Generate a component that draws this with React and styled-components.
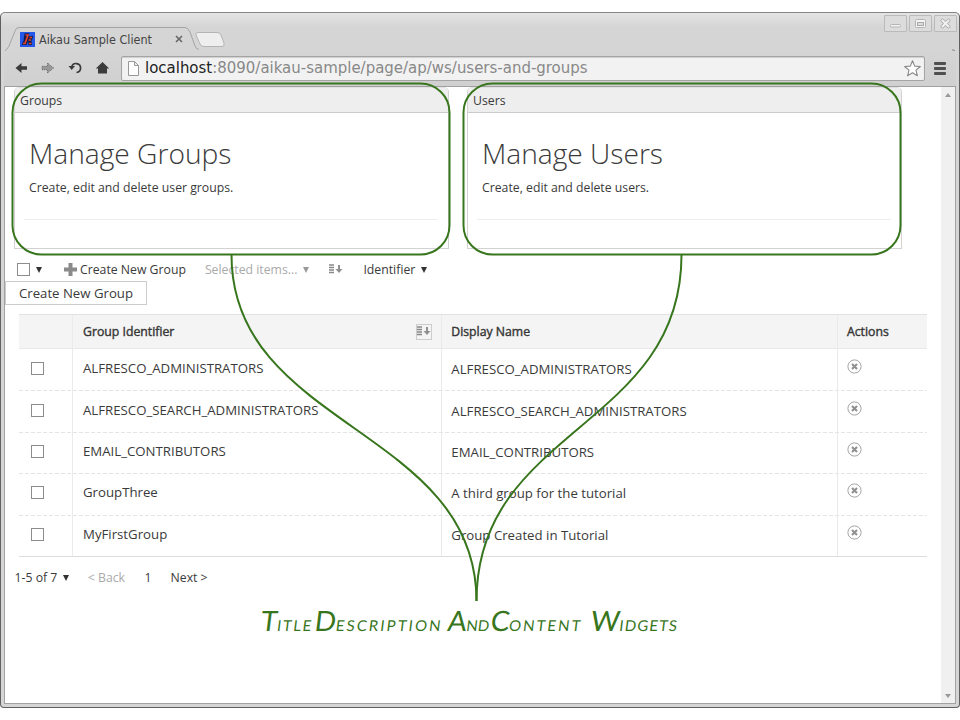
import React from 'react';
import styled, { createGlobalStyle } from 'styled-components';

const GlobalStyle = createGlobalStyle`
  * { box-sizing: border-box; }
  body { margin: 0; background: #fff; overflow: hidden; }
`;

const Stage = styled.div`
  position: relative;
  width: 960px;
  height: 720px;
  padding-top: 12px;
  font-family: "Open Sans", "Noto Sans", sans-serif;
  font-size: 12.25px;
  color: #3a3a3a;
`;

const Window = styled.div`
  display: flex;
  flex-direction: column;
  height: 696px;
  border: 1px solid #606060;
  border-top-color: #858585;
  border-radius: 5px 5px 4px 4px;
  background: linear-gradient(#e4e4e4, #d5d5d5 14px, #d5d5d5);
  overflow: hidden;
`;

const TabStrip = styled.div`
  display: flex;
  height: 37px;
  flex: none;
  position: relative;
`;

const TabShapes = styled.svg`
  position: absolute;
  left: 0;
  top: 0;
`;

const TabContent = styled.div`
  position: relative;
  display: flex;
  align-items: center;
  width: 170px;
  height: 24px;
  margin: 14px 0 0 19px;
  font: 12.5px "DejaVu Sans Condensed", "DejaVu Sans", sans-serif;
  color: #444;
`;

const TabTitle = styled.span`
  margin-left: 4px;
  white-space: nowrap;
  flex: 1;
`;

const TabClose = styled.svg`
  margin-right: 7px;
`;

const WindowButtons = styled.div`
  display: flex;
  gap: 2px;
  margin: 2px 2px 0 auto;
  position: relative;
`;

const WindowButton = styled.div`
  display: grid;
  place-items: center;
  width: 23px;
  height: 17px;
  border: 1px solid #bababa;
  border-radius: 1px;
  background: #dcdcdc;
`;

const Toolbar = styled.div`
  display: flex;
  align-items: center;
  flex: none;
  height: 37px;
  margin: 0 3px;
  border-bottom: 1px solid #a0a0a0;
  background: linear-gradient(#d5d5d5, #d0d0d0);
`;

const NavIcons = styled.svg`
  flex: none;
`;

const AddressBar = styled.div`
  display: flex;
  align-items: center;
  width: 804px;
  height: 25px;
  padding: 0 3px 0 6px;
  border: 1px solid #a4a4a4;
  border-radius: 2px;
  background: #f2f2f2;
  box-shadow: inset 0 1px 1px #cfcfcf;
  font: 14.97px "DejaVu Sans", sans-serif;
  color: #888;
`;

const Url = styled.span`
  flex: 1;
  margin-left: 6px;
  white-space: nowrap;
  b { font-weight: 400; color: #222; }
`;

const MenuIcon = styled.div`
  display: grid;
  gap: 2px;
  margin-left: 9px;
  i { width: 12px; height: 3px; border-radius: 1px; background: #505050; }
`;

const Viewport = styled.div`
  display: flex;
  flex: 1;
  margin: 0 3px 3px;
  border: 1px solid #a2a2a2;
  border-top: 0;
  background: #fff;
  min-height: 0;
`;

const Page = styled.main`
  width: 936px;
  flex: none;
`;

const Scrollbar = styled.div`
  display: flex;
  flex-direction: column;
  justify-content: space-between;
  align-items: center;
  flex: 1;
  padding: 6px 0 5px;
  background: #f0f0f0;
`;

const ScrollArrow = styled.div`
  border: 3.5px solid transparent;
  border-top-width: 0;
  border-bottom: 4px solid #999;
  transform: ${p => (p.$down ? 'rotate(180deg)' : 'none')};
`;

const Cards = styled.section`
  display: flex;
  gap: 18px;
  padding-left: 9px;
`;

const Card = styled.article`
  width: 435px;
  height: 162px;
  border: 1px solid #d2d2d2;
  border-top-color: #e2e2e2;
  border-radius: 5px 5px 0 0;
`;

const CardHeader = styled.header`
  height: 25px;
  padding-left: 5px;
  border-bottom: 1px solid #ccc;
  border-radius: 4px 4px 0 0;
  background: #eee;
  line-height: 26px;
`;

const CardTitle = styled.h1`
  margin: 0 0 0 14px;
  padding-top: 21px;
  font-size: 28.15px;
  font-weight: 300;
  line-height: 38px;
`;

const CardText = styled.p`
  height: 48px;
  margin: 0 10px 0 9px;
  padding-left: 5px;
  border-bottom: 1px solid #eee;
  line-height: 32px;
`;

const Actions = styled.div`
  display: flex;
  align-items: center;
  height: 40px;
  padding: 0 0 0 12px;
  white-space: nowrap;
`;

const CheckBox = styled.span`
  flex: none;
  width: 13px;
  height: 13px;
  border: 1px solid #8c8c8c;
  background: #fff;
`;

const Caret = styled.span`
  flex: none;
  width: 0;
  height: 0;
  margin: 1px 0 0 6px;
  border: 3.5px solid transparent;
  border-bottom-width: 0;
  border-top: 6px solid ${p => (p.$muted ? '#999' : '#333')};
`;

const PlusIcon = styled.svg`
  margin: 0 3px 0 22px;
`;

const ActionLabel = styled.span`
  margin-left: ${p => p.$left || 0}px;
  color: ${p => (p.$muted ? '#aaa' : '#3a3a3a')};
`;

const SortIcon = styled.svg`
  margin-left: ${p => p.$left || 0}px;
`;

const CreateButton = styled.button`
  display: block;
  width: 142px;
  height: 24px;
  margin: -8px 0 0;
  padding: 0;
  border: 1px solid #ccc;
  background: #fff;
  color: #3a3a3a;
  font: 13.2px/20px "Open Sans", sans-serif;
`;

const Table = styled.div`
  width: 908px;
  margin: 9px 0 0 14px;
  border-bottom: 1px solid #ddd;
`;

const Row = styled.div`
  display: grid;
  grid-template-columns: 54px 369px 396px 89px;
  height: 41.4px;
  font-size: 13.23px;
  & + & { background: repeating-linear-gradient(90deg, #e4e4e4 0 4px, transparent 4px 6px) top / 100% 1px no-repeat; }
`;

const HeadRow = styled.div`
  display: grid;
  grid-template-columns: 54px 369px 396px 89px;
  height: 35px;
  border-top: 1px solid #e2e2e2;
  border-bottom: 1px solid #e8e8e8;
  background: #f4f4f4;
  -webkit-text-stroke: 0.4px #333;
`;

const Cell = styled.div`
  display: flex;
  align-items: center;
  justify-content: ${p => (p.$spread ? 'space-between' : 'flex-start')};
  padding: 0 10px ${p => p.$lift || 0}px ${p => p.$inset || 10}px;
  border-right: 1px solid #ebebeb;
  &:last-child { border-right: 0; }
`;

const SortBox = styled.span`
  display: grid;
  place-items: center;
  width: 16px;
  height: 16px;
  margin-right: -1px;
  border: 1px solid #ccc;
`;

const Pager = styled.nav`
  display: flex;
  align-items: center;
  height: 41px;
  padding-left: 9.5px;
`;

const Annotation = styled.svg`
  position: absolute;
  inset: 0;
  pointer-events: none;
`;

const Caption = styled.div`
  position: absolute;
  left: 261px;
  top: 603px;
  width: 430px;
  display: flex;
  align-items: baseline;
  color: #38761d;
  font-family: Lato, sans-serif;
  font-variant: small-caps;
  white-space: pre;
  transform: skewX(-7deg);
`;

const Word = styled.span`
  display: inline-block;
  width: ${p => p.$width}px;
  font-size: 22px;
  line-height: 34px;
  letter-spacing: ${p => p.$track}px;
  &::first-letter { font-size: 28px; letter-spacing: 0; line-height: 34px; }
`;

const Sort = ({ left }) => (
  <SortIcon $left={left} width="14" height="11" viewBox="0 0 14 11">
    <path d="M0 1h5M0 3.5h5M0 6h5M0 8.500h5" stroke="#888" strokeWidth="1.3" />
    <path d="M9 1h2v4h2.500l-3.500 4-3.500-4h2.500z" fill="#909090" />
  </SortIcon>
);

const DeleteIcon = () => (
  <svg width="15" height="15" viewBox="0 0 15 15">
    <circle cx="7.5" cy="7.5" r="6.6" fill="none" stroke="#a4a4a4" />
    <path d="M5 5l5 5M10 5l-5 5" stroke="#909090" strokeWidth="2.1" />
  </svg>
);

const groups = [
  ['ALFRESCO_ADMINISTRATORS', 'ALFRESCO_ADMINISTRATORS'],
  ['ALFRESCO_SEARCH_ADMINISTRATORS', 'ALFRESCO_SEARCH_ADMINISTRATORS'],
  ['EMAIL_CONTRIBUTORS', 'EMAIL_CONTRIBUTORS'],
  ['GroupThree', 'A third group for the tutorial'],
  ['MyFirstGroup', 'Group Created in Tutorial'],
];

const captionWords = [
  ['Title', 54, 1.6], ['Description', 133, 2.1], ['And', 43, 0],
  ['Content', 100, 2], ['Widgets', 90, 1.1],
];

function BrowserChrome() {
  return (
    <>
      <TabStrip>
        <TabShapes width="958" height="38">
          <path d="M3 60V42Q3 37 6 36Q8 34 10 28L14 18Q15 14.500 18 14.500H184Q187 14.500 189 19L194 33Q195 36 198 36.500" fill="#d5d5d5" stroke="#a4a4a4" />
          <path d="M197 19.500H216Q219 19.500 220 22L223 30Q224 33.500 221 33.500H203Q200 33.500 199 31L195 22Q194 19.500 197 19.500Z" fill="#eee" stroke="#b4b4b4" />
          <path d="M951 37H953Q954.500 37 954.500 42" fill="none" stroke="#888" />
        </TabShapes>
        <TabContent>
          <svg width="15" height="15">
            <rect width="15" height="15" fill="#2458e8" />
            <path d="M4.500 1.500L9 1L8.500 4H13L12.500 7L11.500 8L12 13H8.500L8 9L6.500 13H2L2.500 10.500L3.500 9Z" fill="#141b48" />
            <path d="M5.500 3H8L5 11.500H3M9.500 5.500H12M8.500 8H11M9 11.500H11.500" fill="none" stroke="#e9432b" strokeWidth="1.700" />
          </svg>
          <TabTitle>Aikau Sample Client</TabTitle>
          <TabClose width="8" height="8"><path d="M1 1L7 7M7 1L1 7" stroke="#666" strokeWidth="1.600" /></TabClose>
        </TabContent>
        <WindowButtons>
          <WindowButton><svg width="13" height="11"><rect x="1.500" y="6.500" width="10" height="2.500" rx="1" fill="#f4f4f4" stroke="#b4b4b4" /></svg></WindowButton>
          <WindowButton><svg width="13" height="11"><rect x="1.500" y="1.500" width="10" height="8" rx="1" fill="#f4f4f4" stroke="#b4b4b4" /><rect x="3.500" y="4.500" width="6" height="3" fill="#ddd" stroke="#aaa" /></svg></WindowButton>
          <WindowButton><svg width="13" height="11"><path d="M3.500 2.500L9.500 8.500M9.500 2.500L3.500 8.500" stroke="#aaa" strokeWidth="3.800" strokeLinecap="round" /><path d="M3.500 2.500L9.500 8.500M9.500 2.500L3.500 8.500" stroke="#f0f0f0" strokeWidth="2.200" strokeLinecap="round" /></svg></WindowButton>
        </WindowButtons>
      </TabStrip>
      <Toolbar>
        <NavIcons width="117" height="36">
          <path d="M11.500 18L17.500 13V16.300H23V19.700H17.500V23Z" fill="#3b3b3b" />
          <path d="M49.500 18L43.500 13V16.300H38V19.700H43.500V23Z" fill="#999" stroke="#666" strokeWidth="1" strokeDasharray="1 1" />
          <path d="M72.500 22.500A4.500 4.500 0 1 0 67.700 17" fill="none" stroke="#3b3b3b" strokeWidth="1.700" />
          <path d="M64.500 16H71L67.700 20Z" fill="#3b3b3b" />
          <path d="M91.800 18.500L98.500 12L105.200 18.500H103V23.500H94V18.500Z" fill="#3b3b3b" />
        </NavIcons>
        <AddressBar>
          <svg width="11" height="15"><path d="M.5.5H6.500L10.500 4.500V14.500H.5ZM6.500.5V4.500H10.500" fill="#fff" stroke="#999" /></svg>
          <Url><b>localhost</b>:8090/aikau-sample/page/ap/ws/users-and-groups</Url>
          <svg width="17" height="17" viewBox="0 0 17 17"><path d="M8.500 .8L10.700 6.100L16.400 6.500L12 10.200L13.400 15.800L8.500 12.800L3.600 15.800L5 10.200L.6 6.500L6.300 6.100Z" fill="#fff" stroke="#888" strokeWidth="1.100" strokeLinejoin="round" /></svg>
        </AddressBar>
        <MenuIcon><i /><i /><i /></MenuIcon>
      </Toolbar>
    </>
  );
}

export default function App() {
  return (
    <Stage>
      <GlobalStyle />
      <Window>
        <BrowserChrome />
        <Viewport>
          <Page>
            <Cards>
              <Card>
                <CardHeader>Groups</CardHeader>
                <CardTitle>Manage Groups</CardTitle>
                <CardText>Create, edit and delete user groups.</CardText>
              </Card>
              <Card>
                <CardHeader>Users</CardHeader>
                <CardTitle>Manage Users</CardTitle>
                <CardText>Create, edit and delete users.</CardText>
              </Card>
            </Cards>
            <Actions>
              <CheckBox /><Caret />
              <PlusIcon width="13" height="13"><path d="M6.500 0V13M0 6.500H13" stroke="#8a8a8a" strokeWidth="4" /></PlusIcon>
              <ActionLabel>Create New Group</ActionLabel>
              <ActionLabel $left={19} $muted>Selected items...</ActionLabel>
              <Caret $muted />
              <Sort left={20} />
              <ActionLabel $left={20}>Identifier</ActionLabel>
              <Caret />
            </Actions>
            <CreateButton>Create New Group</CreateButton>
            <Table>
              <HeadRow>
                <Cell />
                <Cell $spread>Group Identifier<SortBox><Sort /></SortBox></Cell>
                <Cell $inset={9.3}>Display Name</Cell>
                <Cell $inset={9}>Actions</Cell>
              </HeadRow>
              {groups.map(([id, name]) => (
                <Row key={id}>
                  <Cell $inset={12} $lift={2}><CheckBox /></Cell>
                  <Cell $lift={3}>{id}</Cell>
                  <Cell $lift={1} $inset={9.3}>{name}</Cell>
                  <Cell $lift={6} $inset={9}><DeleteIcon /></Cell>
                </Row>
              ))}
            </Table>
            <Pager>
              <ActionLabel>1-5 of 7</ActionLabel><Caret />
              <ActionLabel $left={18.5} $muted>&lt; Back</ActionLabel>
              <ActionLabel $left={19.5}>1</ActionLabel>
              <ActionLabel $left={19}>Next &gt;</ActionLabel>
            </Pager>
          </Page>
          <Scrollbar><ScrollArrow /><ScrollArrow $down /></Scrollbar>
        </Viewport>
      </Window>
      <Annotation width="960" height="720" fill="none" stroke="#38761d" strokeWidth="2">
        <rect x="12.500" y="83.500" width="437" height="171" rx="29" />
        <rect x="463.500" y="83.500" width="437" height="171" rx="29" />
        <path d="M231.500 255C231.500 428 476.500 428 476.500 601" />
        <path d="M681.500 255C681.500 428 476.500 428 476.500 601" />
      </Annotation>
      <Caption>
        {captionWords.map(([word, width, track]) => (
          <Word key={word} $width={width} $track={track}>{word}</Word>
        ))}
      </Caption>
    </Stage>
  );
}
